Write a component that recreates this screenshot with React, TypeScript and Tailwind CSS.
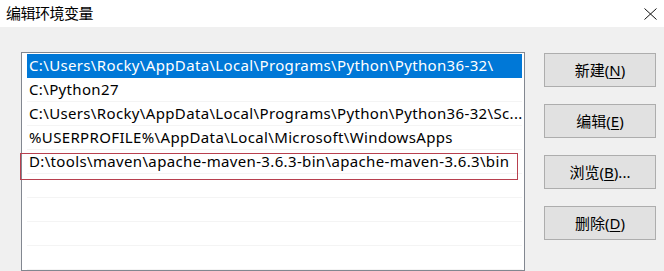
import React from "react";

const rows = [
  "C:\\Users\\Rocky\\AppData\\Local\\Programs\\Python\\Python36-32\\",
  "C:\\Python27",
  "C:\\Users\\Rocky\\AppData\\Local\\Programs\\Python\\Python36-32\\Sc...",
  "%USERPROFILE%\\AppData\\Local\\Microsoft\\WindowsApps",
  "D:\\tools\\maven\\apache-maven-3.6.3-bin\\apache-maven-3.6.3\\bin",
  "",
  "",
  "",
  "",
];

const buttons = [
  { label: "新建(", key: "N", tail: ")" },
  { label: "编辑(", key: "E", tail: ")" },
  { label: "浏览(", key: "B", tail: ")..." },
  { label: "删除(", key: "D", tail: ")" },
];

const font = { fontFamily: '"Noto Sans", "Noto Sans CJK SC", sans-serif' };

export default function App() {
  return (
    <div className="relative flex h-[271px] w-[664px] flex-col overflow-hidden bg-[#f0f0f0] text-[15px] text-black" style={font}>
      {/* title bar */}
      <div className="flex h-[27px] shrink-0 items-center justify-between bg-white pl-[6px] pr-[6px]">
        <span className="leading-none tracking-[-0.5px]">编辑环境变量</span>
        <svg width="13" height="12" viewBox="0 0 13 12" className="mr-[1px]">
          <path d="M0.5 0.5 L12.5 11.5 M12.5 0.5 L0.5 11.5" stroke="#111" strokeWidth="1" />
        </svg>
      </div>

      <div className="flex pl-[21px] pt-[25px]">
        {/* list box */}
        <div className="relative w-[504px] shrink-0 border border-[#828790] bg-white pl-[5px] pr-[2px] pt-px">
          {rows.map((r, i) => (
            <div
              key={i}
              className={
                "h-[24px] whitespace-nowrap pl-[2px] leading-[22px] tracking-[0.35px] " +
                (i === 0 ? "bg-[#0078d7] text-white" : "border-b border-[#f4f4f4]")
              }
            >
              {r}
            </div>
          ))}
          {/* red highlight */}
          <div className="absolute left-[-2px] top-[100px] h-[27px] w-[498px] border border-[#b8404f]" />
        </div>

        {/* buttons */}
        <div className="ml-[19px] flex flex-col gap-[17px] pt-[1px]">
          {buttons.map((b) => (
            <div
              key={b.key}
              className="flex h-[34px] w-[112px] items-center justify-center border border-[#adadad] bg-[#e1e1e1]"
            >
              {b.label}
              <span className="underline underline-offset-2">{b.key}</span>
              {b.tail}
            </div>
          ))}
        </div>
      </div>
    </div>
  );
}
